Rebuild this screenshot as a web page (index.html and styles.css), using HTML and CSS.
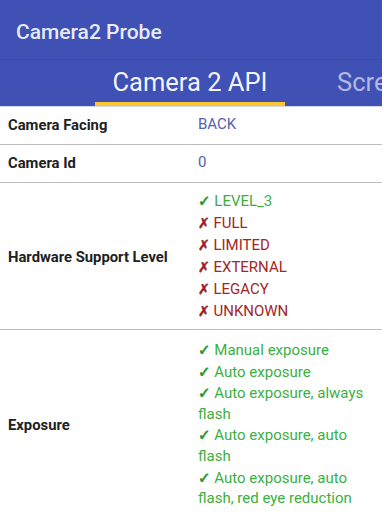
FILE: index.html
```html
<!DOCTYPE html>
<html>
<head>
<meta charset="utf-8">
<link rel="stylesheet" href="styles.css">
</head>
<body>
<div class="page">
  <header class="appbar">
    <div class="toolbar"><span class="title">Camera2 Probe</span></div>
    <nav class="tabs">
      <div class="tab active">Camera 2 API</div>
      <div class="tab inactive">Screen</div>
    </nav>
  </header>
  <main class="table">
    <div class="row single">
      <div class="label">Camera Facing</div>
      <div class="value plain">BACK</div>
    </div>
    <div class="row single">
      <div class="label">Camera Id</div>
      <div class="value plain">0</div>
    </div>
    <div class="row multi">
      <div class="label">Hardware Support Level</div>
      <div class="value">
        <div class="item ok"><span class="mark">✓</span> LEVEL_3</div>
        <div class="item no"><span class="mark">✗</span> FULL</div>
        <div class="item no"><span class="mark">✗</span> LIMITED</div>
        <div class="item no"><span class="mark">✗</span> EXTERNAL</div>
        <div class="item no"><span class="mark">✗</span> LEGACY</div>
        <div class="item no"><span class="mark">✗</span> UNKNOWN</div>
      </div>
    </div>
    <div class="row multi last">
      <div class="label">Exposure</div>
      <div class="value tight">
        <div class="item ok"><span class="mark">✓</span> Manual exposure</div>
        <div class="item ok"><span class="mark">✓</span> Auto exposure</div>
        <div class="item ok"><span class="mark">✓</span> Auto exposure, always flash</div>
        <div class="item ok"><span class="mark">✓</span> Auto exposure, auto flash</div>
        <div class="item ok"><span class="mark">✓</span> Auto exposure, auto flash, red eye reduction</div>
      </div>
    </div>
  </main>
</div>
</body>
</html>
```
FILE: styles.css
```css
html, body {
  margin: 0;
  padding: 0;
  background: #ffffff;
}
body {
  font-family: Roboto, "Liberation Sans", sans-serif;
}
.page {
  width: 382px;
  overflow: hidden;
}
.appbar {
  background: #3f51b5;
}
.toolbar {
  height: 59px;
  display: flex;
  align-items: center;
  padding-left: 16px;
  border-bottom: 1px solid #3a4aa6;
}
.title {
  color: rgba(255, 255, 255, 0.9);
  font-size: 21px;
  font-weight: 500;
  padding-top: 4px;
}
.tabs {
  display: flex;
  height: 46px;
  white-space: nowrap;
  overflow: hidden;
}
.tab {
  font-size: 25.5px;
  line-height: 40px;
  padding-top: 2px;
  color: #ffffff;
  flex: none;
}
.tab.active {
  margin-left: 95px;
  width: 190px;
  text-align: center;
  border-bottom: 4px solid #fbc730;
  color: rgba(255, 255, 255, 0.95);
}
.tab.inactive {
  padding-left: 52px;
  color: rgba(255, 255, 255, 0.6);
}
.table {
  border-top: 1px solid #d6d8e6;
}
.row {
  display: flex;
  align-items: center;
  padding: 6px 0 8px;
  border-bottom: 1.5px solid #bdbdbd;
}
.row.single {
  min-height: 23px;
}
.row.multi {
  padding: 8px 0 6px;
}
.row.last {
  padding-top: 10px;
  border-bottom: none;
}
.label {
  flex: 0 0 182px;
  padding-left: 8px;
  font-size: 14.8px;
  font-weight: 700;
  color: #212121;
}
.value {
  flex: 1;
  padding-left: 8px;
  padding-right: 8px;
  font-size: 15px;
  line-height: 21px;
}
.value.tight {
  line-height: 20.6px;
}
.value.plain {
  color: #5460b0;
}
.item {
  margin-bottom: 1px;
}
.mark {
  font-family: "DejaVu Sans", sans-serif;
  font-weight: 700;
  -webkit-text-stroke: 0.6px currentColor;
}
.ok {
  color: #3aaf3f;
}
.ok .mark {
  color: #23932c;
  font-size: 15px;
}
.no {
  color: #a32525;
}
.no .mark {
  color: #9a1f1f;
  font-size: 14px;
}
```
